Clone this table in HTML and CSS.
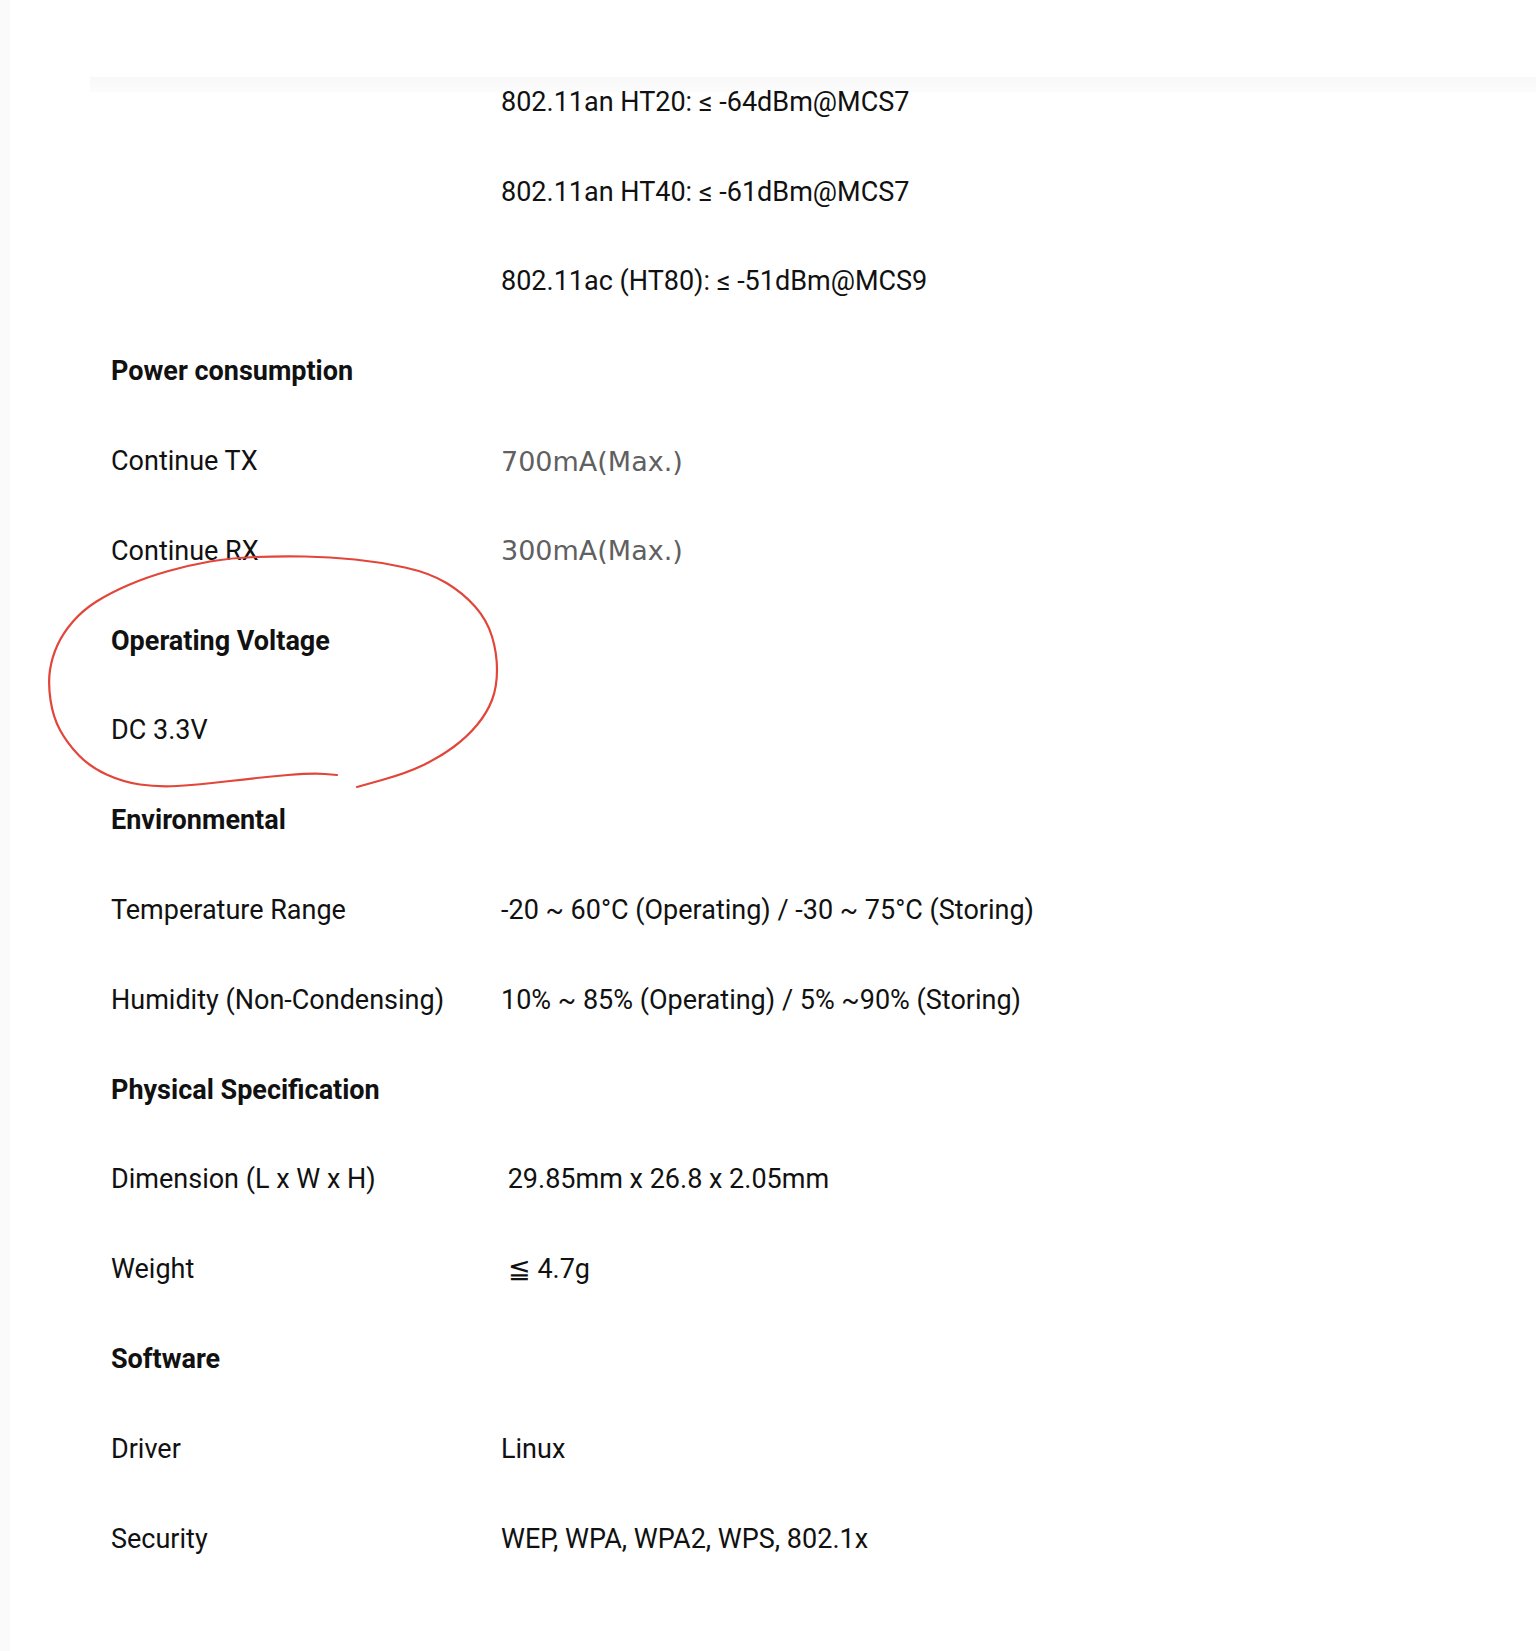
FILE: index.html
```html
<!DOCTYPE html>
<html lang="en">

<head>
  <meta charset="UTF-8">
  <meta name="viewport" content="width=device-width, initial-scale=1.0">
  <title>Specifications</title>
  <link rel="stylesheet" href="styles.css">
</head>

<body>
  <div class="page">
    <div class="spec-table">
      <div class="label"></div>
      <div class="value">802.11an HT20: ≤ -64dBm@MCS7</div>
      <div class="label"></div>
      <div class="value">802.11an HT40: ≤ -61dBm@MCS7</div>
      <div class="label"></div>
      <div class="value">802.11ac (HT80): ≤ -51dBm@MCS9</div>

      <div class="section">Power consumption</div>
      <div class="label">Continue TX</div>
      <div class="value muted">700mA(Max.)</div>
      <div class="label">Continue RX</div>
      <div class="value muted">300mA(Max.)</div>

      <div class="section">Operating Voltage</div>
      <div class="label">DC 3.3V</div>
      <div class="value"></div>

      <div class="section">Environmental</div>
      <div class="label">Temperature Range</div>
      <div class="value">-20 ~ 60°C (Operating) / -30 ~ 75°C (Storing)</div>
      <div class="label">Humidity (Non-Condensing)</div>
      <div class="value">10% ~ 85% (Operating) / 5% ~90% (Storing)</div>

      <div class="section">Physical Specification</div>
      <div class="label">Dimension (L x W x H)</div>
      <div class="value">&nbsp;29.85mm x 26.8 x 2.05mm</div>
      <div class="label">Weight</div>
      <div class="value">&nbsp;≦ 4.7g</div>

      <div class="section">Software</div>
      <div class="label">Driver</div>
      <div class="value">Linux</div>
      <div class="label">Security</div>
      <div class="value">WEP, WPA, WPA2, WPS, 802.1x</div>
    </div>

    <!-- hand drawn mark around the voltage row -->
    <svg class="scribble" width="1536" height="1651" viewBox="0 0 1536 1651">
      <path d="M337 775 L325 774 Q313 773 288 775 Q263 777 230 781 Q197 785 177 786 Q157 787 140 784.5 Q123 782 106.5 774.5 Q90 767 78.5 755 Q67 743 60 730 Q53 717 50.5 700 Q48 683 50 670 Q52 657 57.5 645 Q63 633 73 621.5 Q83 610 96.5 601.5 Q110 593 128.5 585 Q147 577 168.5 571 Q190 565 210 561.5 Q230 558 255 557 Q280 556 305 556.5 Q330 557 355 559.5 Q380 562 405 567.5 Q430 573 446.5 583 Q463 593 475 606.5 Q487 620 492 636.5 Q497 653 497 670 Q497 687 492 700 Q487 713 477 725 Q467 737 453.5 747 Q440 757 423.5 765 Q407 773 382 780 L357 787"
        fill="none" stroke="#e2463a" stroke-width="2.2" stroke-linecap="round" stroke-linejoin="round" />
    </svg>
  </div>
</body>

</html>
```

FILE: styles.css
```css
body {
  margin: 0;
  background: #fff;
  font-family: Roboto, "Liberation Sans", sans-serif;
  color: #111;
}

.page {
  position: relative;
  min-height: 1651px;
  border-left: 10px solid #fafafa;
  box-sizing: border-box;
}

.spec-table {
  display: grid;
  grid-template-columns: 390px 1fr;
  grid-auto-rows: 89.8px;
  margin-left: 80px;
  padding-top: 57px;
  padding-left: 21px;
  font-size: 27px;
  background: linear-gradient(#f8f8f8, #fcfcfc) no-repeat 0 77px / 100% 15px;
}

.label,
.value,
.section {
  display: flex;
  align-items: center;
  white-space: nowrap;
}

.section {
  grid-column: 1 / 3;
  font-weight: 700;
}

.muted {
  font-family: "DejaVu Sans", Verdana, sans-serif;
  font-size: 27px;
  color: #606060;
}

/* 圈注 */
.scribble {
  position: absolute;
  top: 0;
  left: -10px;
  pointer-events: none;
}
```
